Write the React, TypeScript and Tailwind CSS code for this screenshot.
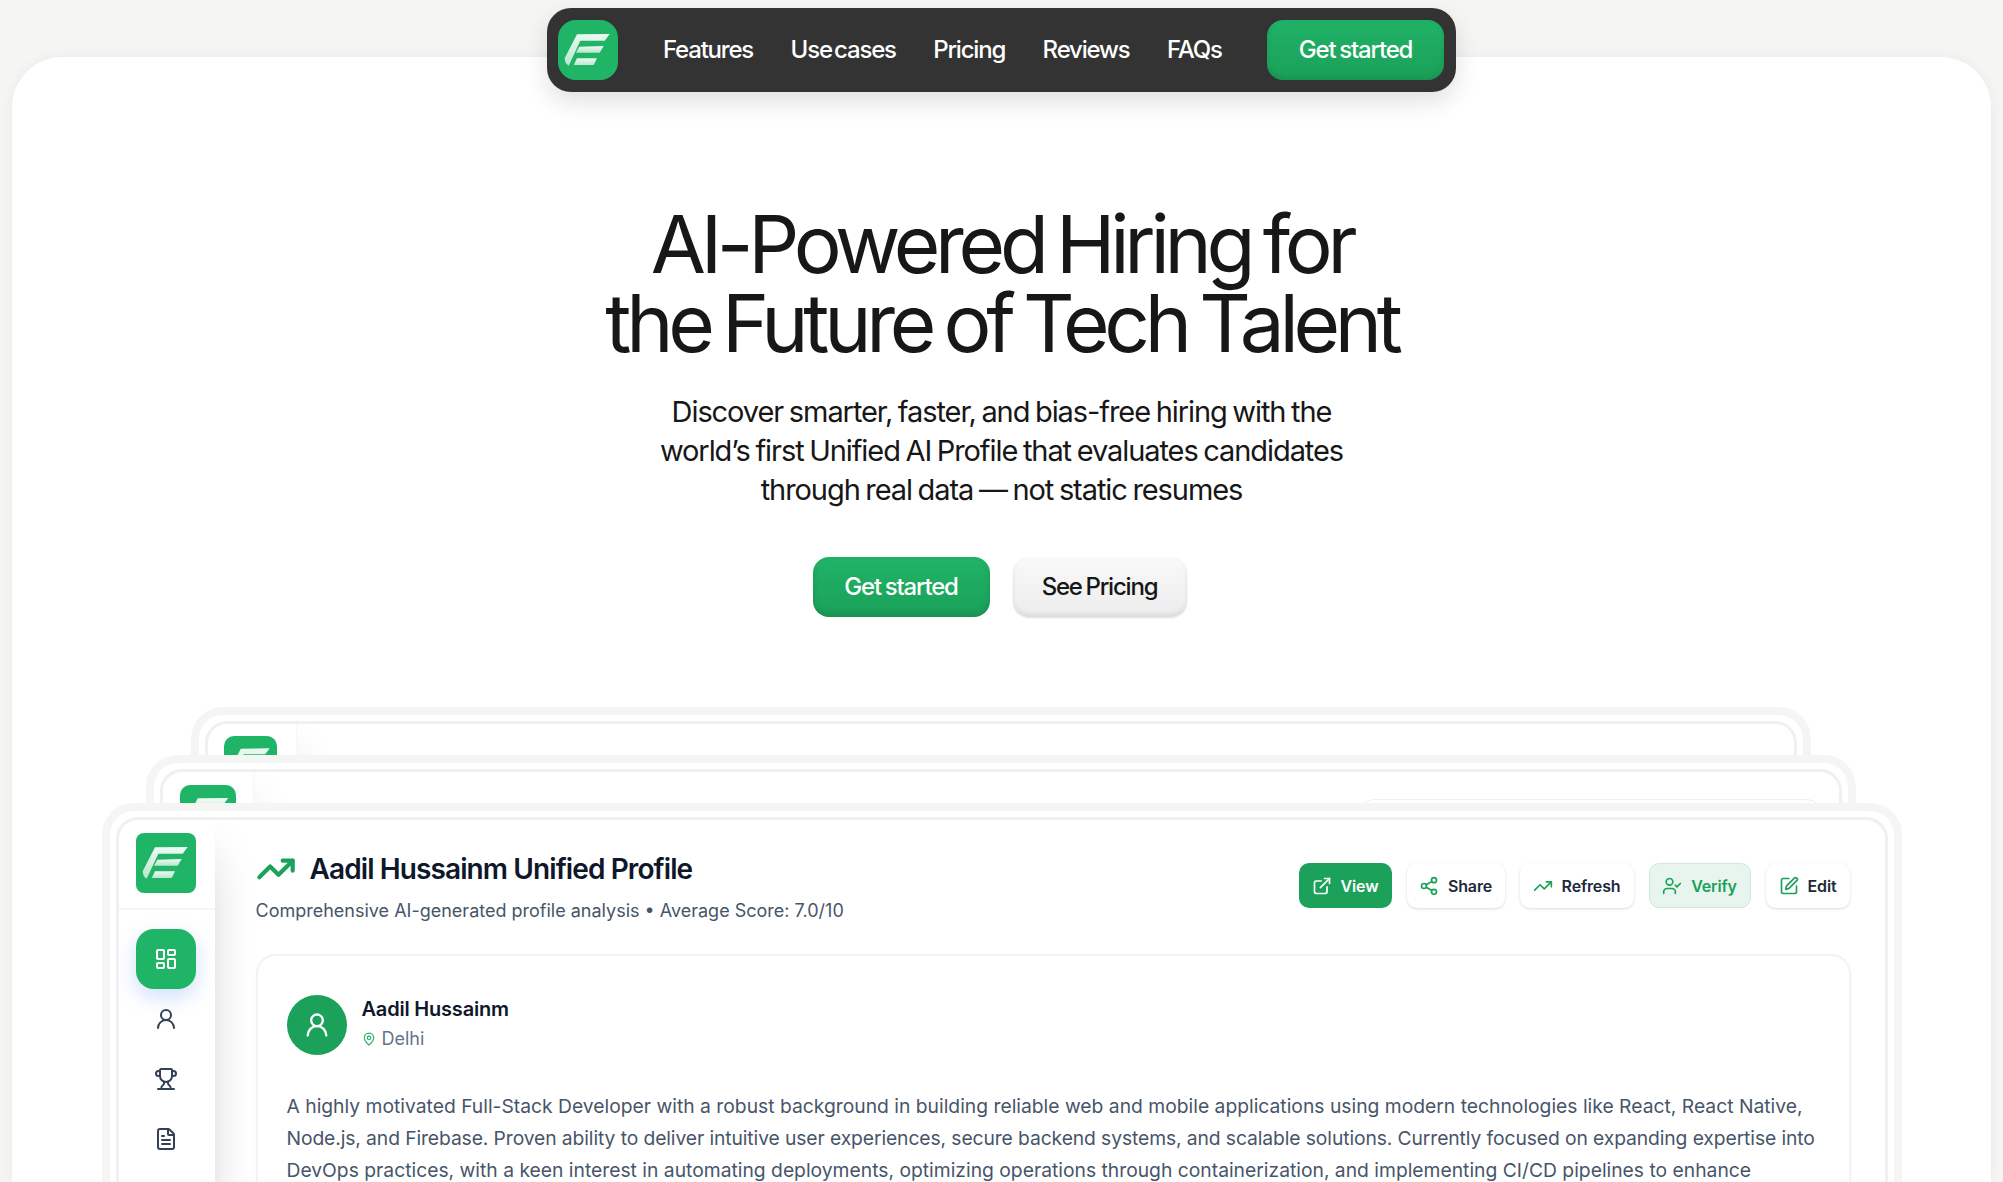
import { ExternalLink, FileText, LayoutDashboard, MapPin, Share2, SquarePen, Trophy, TrendingUp, UserCheck, UserRound } from "lucide-react";

function Logo({ className }: { className: string }) {
  return (
    <div className={"shrink-0 bg-[#20b566] " + className}>
      <svg viewBox="0 0 60 60" className="h-full w-full">
        <defs>
          <linearGradient id="lg" x1="0" y1="0" x2="0" y2="1">
            <stop offset="0" stopColor="#ffffff" stopOpacity="0.92" />
            <stop offset="1" stopColor="#ffffff" stopOpacity="0.68" />
          </linearGradient>
        </defs>
        <path d="M19 14.3 L51.7 14 L46.7 20.7 L22.3 20.7 L10.7 45.7 Q7 44 6.7 38.3 Z" fill="url(#lg)" />
        <path d="M21.3 26.7 L45.7 26 L41.7 32.7 L18 32.7 Z" fill="url(#lg)" />
        <path d="M19 38.3 L39 38.3 L35.7 45 L15.7 45 Z" fill="url(#lg)" />
      </svg>
    </div>
  );
}

function NavLink({ label }: { label: string }) {
  return <a className="text-[24px] font-medium tracking-[-0.05em] text-white [word-spacing:-0.12em]">{label}</a>;
}

function ActionButton({ label, icon, className, iconClass }: { label: string; icon: React.ReactNode; className: string; iconClass?: string }) {
  return (
    <button className={"flex h-[45px] items-center justify-center gap-[9px] rounded-[10px] text-[16px] font-semibold tracking-[-0.01em] " + className}>
      <span className={iconClass}>{icon}</span>
      {label}
    </button>
  );
}

function BackShell({ className, logoClass, railClass, children }: { className: string; logoClass: string; railClass: string; children?: React.ReactNode }) {
  return (
    <div className={"absolute rounded-[32px] border-[8px] border-[#f5f5f3] bg-white p-[6px] " + className}>
      <div className="relative h-full overflow-hidden rounded-[22px] border-[3px] border-[#f0f0f0]">
        <div className={"h-full border-r border-[#f7f7f7] shadow-[0_25px_50px_-12px_rgba(0,0,0,0.25)] " + railClass}>
          <Logo className={logoClass} />
        </div>
        {children}
      </div>
    </div>
  );
}

export default function App() {
  return (
    <div className="flex h-[1182px] flex-col items-center overflow-hidden bg-[#f5f5f3] pt-2 font-['Inter',sans-serif]">
      <nav className="relative z-20 flex h-[84px] w-[909px] shrink-0 items-center rounded-[24px] bg-[#333333] pl-[11px] pr-3 shadow-[0_10px_24px_rgba(0,0,0,0.12)]">
        <Logo className="h-[60px] w-[60px] rounded-[18px]" />
        <div className="ml-[45px] flex items-center gap-[37.5px]">
          <NavLink label="Features" />
          <NavLink label="Use cases" />
          <NavLink label="Pricing" />
          <NavLink label="Reviews" />
          <NavLink label="FAQs" />
        </div>
        <button className="ml-auto h-[60px] w-[177px] rounded-[16px] bg-gradient-to-b from-[#1fb267] to-[#1ba159] text-[24px] font-medium tracking-[-0.05em] text-white shadow-[inset_0_-3px_6px_rgba(0,0,0,0.1)] [word-spacing:-0.06em]">
          Get started
        </button>
      </nav>

      <main className="mx-3 -mt-[35px] flex flex-1 flex-col items-center self-stretch rounded-t-[50px] bg-white pt-[147px] shadow-[0_0_12px_rgba(0,0,0,0.05)]">
        <h1 className="text-center text-[80px] font-normal leading-[79px] tracking-[-0.066em] text-[#171717] [word-spacing:-0.06em]">
          AI-Powered Hiring for
          <br />
          the Future of Tech Talent
        </h1>
        <p className="mt-[30px] text-center text-[29px] leading-[39px] tracking-[-0.037em] text-[#171717] [word-spacing:-0.05em]">
          Discover smarter, faster, and bias-free hiring with the
          <br />
          world’s first Unified AI Profile that evaluates candidates
          <br />
          through real data — not static resumes
        </p>
        <div className="mr-[4px] mt-[48px] flex gap-[23px]">
          <button className="h-[60px] w-[177px] rounded-[16px] bg-gradient-to-b from-[#20b368] to-[#1ba159] text-[24px] font-medium tracking-[-0.05em] text-white shadow-[inset_0_-3px_6px_rgba(0,0,0,0.12)] [word-spacing:-0.06em]">
            Get started
          </button>
          <button className="h-[60px] w-[174px] rounded-[16px] bg-gradient-to-b from-[#f9f9f9] to-[#ededed] text-[24px] font-medium tracking-[-0.05em] text-[#171717] shadow-[inset_0_-3px_5px_rgba(0,0,0,0.08),0_1px_2px_rgba(0,0,0,0.12)] [word-spacing:-0.06em]">
            See Pricing
          </button>
        </div>

        <div className="relative mt-[186px] w-[1800px] flex-1">
          <BackShell className="left-[89px] -top-[96px] h-[300px] w-[1620px]" railClass="w-[89px] pl-[16px] pt-[12px]" logoClass="h-[53px] w-[53px] rounded-[10px]" />
          <BackShell className="left-[44px] -top-[48px] h-[300px] w-[1710px]" railClass="w-[91px] pl-[17px] pt-[13px]" logoClass="h-[56px] w-[56px] rounded-[10px]">
            <div className="absolute right-[16px] top-[27px] h-[100px] w-[465px] rounded-[16px] border border-[#eef0f6]" />
          </BackShell>

          <div className="absolute inset-x-0 top-0 z-10 h-[500px] rounded-[32px] border-[8px] border-[#f5f5f3] bg-white p-[6px]">
            <div className="flex h-full overflow-hidden rounded-[22px] border-[3px] border-[#f0f0f0] bg-white">
              <aside className="relative z-10 flex h-full w-[96px] shrink-0 flex-col items-center bg-white pr-[2px] shadow-[0_25px_50px_-12px_rgba(0,0,0,0.25)]">
                <div className="-mr-[2px] flex h-[90px] w-[96px] items-start justify-center border-b-2 border-[#f6f6f6] pr-[2px] pt-[13px]">
                  <Logo className="h-[60px] w-[60px] rounded-[8px]" />
                </div>
                <div className="mt-[19px] flex h-[60px] w-[60px] items-center justify-center rounded-[18px] bg-[#20b566] text-white shadow-[0_8px_20px_rgba(59,130,246,0.25)]">
                  <LayoutDashboard size={24} strokeWidth={2} />
                </div>
                <div className="flex h-[60px] w-full items-center justify-center text-[#334155]">
                  <UserRound size={24} strokeWidth={2} />
                </div>
                <div className="flex h-[60px] w-full items-center justify-center text-[#334155]">
                  <Trophy size={24} strokeWidth={2} />
                </div>
                <div className="flex h-[60px] w-full items-center justify-center text-[#334155]">
                  <FileText size={24} strokeWidth={2} />
                </div>
              </aside>

              <section className="min-w-0 flex-1 pl-[41px] pr-[34px] pt-[29px]">
                <div className="flex items-start justify-between">
                  <div>
                    <div className="flex items-center gap-[14px]">
                      <TrendingUp size={40} strokeWidth={2.5} className="text-[#1ba159]" />
                      <h2 className="text-[28px] font-semibold leading-[40px] tracking-[-0.032em] text-[#0f172a]">
                        Aadil Hussainm Unified Profile
                      </h2>
                    </div>
                    <p className="mt-[8px] text-[18px] leading-[28px] text-[#475569]">
                      Comprehensive AI-generated profile analysis • Average Score: 7.0/10
                    </p>
                  </div>
                  <div className="mr-[1px] flex gap-[15px] pt-[14px]">
                    <ActionButton label="View" icon={<ExternalLink size={20} />} className="w-[93px] bg-[#1ba159] text-white" />
                    <ActionButton label="Share" icon={<Share2 size={20} />} iconClass="text-[#1ba159]" className="w-[98px] bg-white text-[#1e293b] shadow-[0_1px_3px_rgba(0,0,0,0.15)]" />
                    <ActionButton label="Refresh" icon={<TrendingUp size={20} />} iconClass="text-[#1ba159]" className="w-[114px] bg-white text-[#1e293b] shadow-[0_1px_3px_rgba(0,0,0,0.15)]" />
                    <ActionButton label="Verify" icon={<UserCheck size={20} />} className="w-[102px] border border-[#cfe8da] bg-[#e8f5ee] text-[#1ba159]" />
                    <ActionButton label="Edit" icon={<SquarePen size={20} />} iconClass="text-[#1ba159]" className="w-[84px] bg-white text-[#1e293b] shadow-[0_1px_3px_rgba(0,0,0,0.15)]" />
                  </div>
                </div>

                <div className="mt-[29px] h-[400px] rounded-[20px] border-2 border-[#f3f3f3] bg-white px-[29px] pt-[39px] shadow-[0_1px_3px_rgba(0,0,0,0.04)]">
                  <div className="flex items-center gap-[15px]">
                    <div className="flex h-[60px] w-[60px] items-center justify-center rounded-full bg-[#1ba159] text-white">
                      <UserRound size={28} strokeWidth={2} />
                    </div>
                    <div className="-mt-[2px]">
                      <div className="text-[20px] font-semibold leading-[28px] tracking-[-0.01em] text-[#0f172a]">Aadil Hussainm</div>
                      <div className="mt-[2px] flex items-center gap-[6px] text-[18px] leading-[28px] text-[#64748b]">
                        <MapPin size={14} className="text-[#20b566]" />
                        Delhi
                      </div>
                    </div>
                  </div>
                  <p className="mt-[35px] whitespace-nowrap text-[19.3px] leading-[32px] text-[#475569]">
                    <span className="block">A highly motivated Full-Stack Developer with a robust background in building reliable web and mobile applications using modern technologies like React, React Native,</span>
                    <span className="block tracking-[-0.1px]">Node.js, and Firebase. Proven ability to deliver intuitive user experiences, secure backend systems, and scalable solutions. Currently focused on expanding expertise into</span>
                    <span className="block">DevOps practices, with a keen interest in automating deployments, optimizing operations through containerization, and implementing CI/CD pipelines to enhance</span>
                  </p>
                </div>
              </section>
            </div>
          </div>
        </div>
      </main>
    </div>
  );
}
